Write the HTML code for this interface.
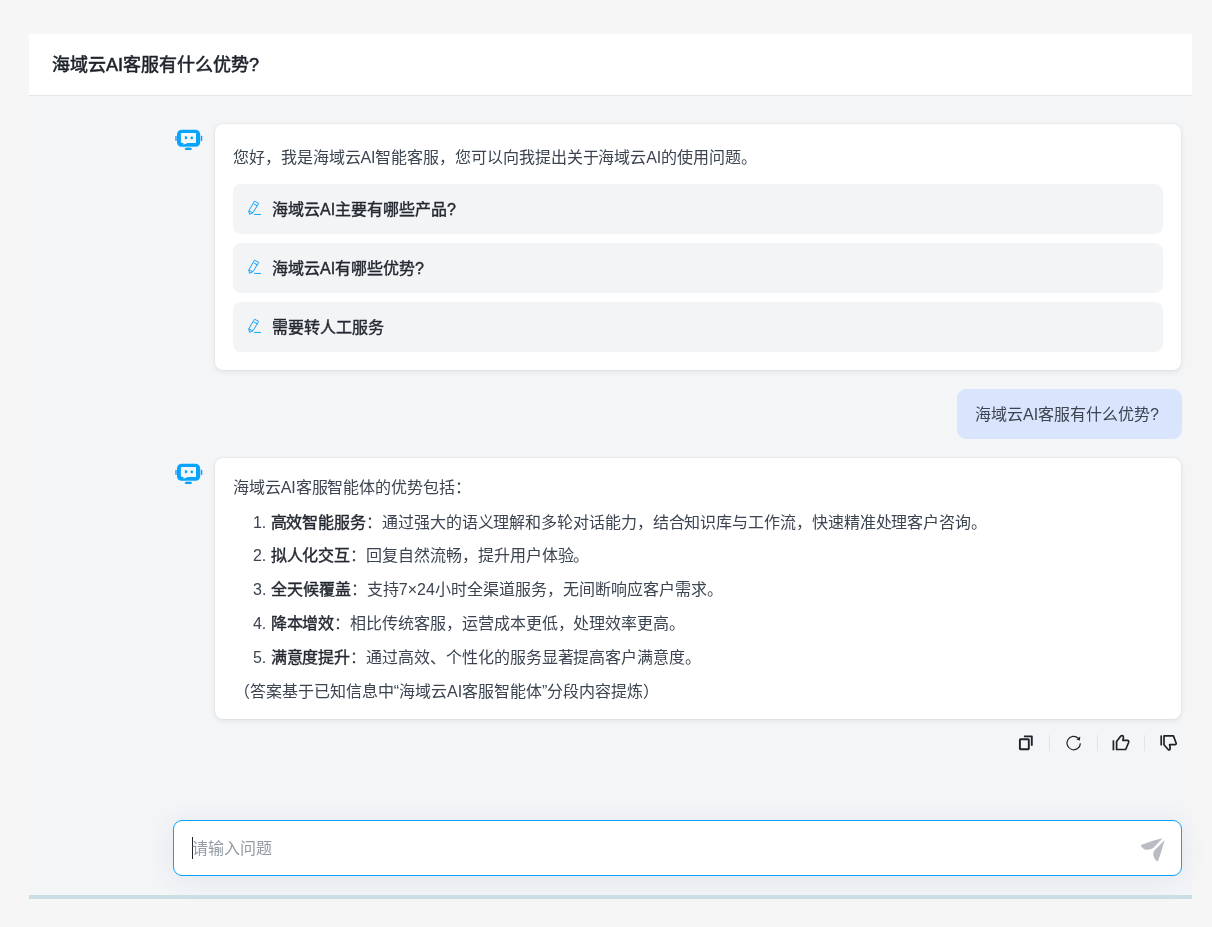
<!DOCTYPE html>
<html lang="zh-CN"><head><meta charset="utf-8">
<style>
*{box-sizing:border-box;margin:0;padding:0}
.t,.msg,.tx,.li,.ph{will-change:transform}
html,body{width:1212px;height:927px;overflow:hidden;background:#f6f6f6;font-family:"Liberation Sans",sans-serif;color:#1f2329}
.wrap{position:absolute;left:29px;top:34px;width:1163px;height:864px;background:#f4f5f7}
.hdr{position:absolute;left:0;top:0;width:1163px;height:62px;background:#fff;border-bottom:1px solid #e3e5e8}
.hdr .t{position:absolute;left:23px;top:18px;font-size:18px;font-weight:normal;-webkit-text-stroke:.55px #1d2129;line-height:26px;color:#1d2129}
.bline{position:absolute;left:0;top:861px;width:1163px;height:4px;background:#c9dfe3}
.robot{position:absolute;width:34px;height:28px}
.bub{position:absolute;left:186px;width:966px;background:#fff;border-radius:8px;box-shadow:0 0 2px rgba(0,0,0,.1),0 2px 6px rgba(0,0,0,.07)}
.msg{position:absolute;font-size:16px;line-height:24px;color:#3b4450;white-space:nowrap}
.sug{position:absolute;left:18px;width:930px;height:50px;background:#f3f4f6;border-radius:8px}
.sug .pen{position:absolute;left:11px;top:13px;width:22px;height:22px}
.sug .tx{position:absolute;left:38.5px;top:14px;font-size:16px;font-weight:normal;-webkit-text-stroke:.4px #232830;line-height:24px;color:#232830;white-space:nowrap}
.user{position:absolute;left:928px;top:355px;width:225px;height:50px;background:#d9e4fd;border-radius:9px}
.user .tx{position:absolute;left:18px;top:14px;font-size:16px;line-height:24px;color:#3b4450;white-space:nowrap}
.li{position:absolute;left:38px;font-size:16px;line-height:24px;color:#3b4450;white-space:nowrap}
.li b{color:#232830;font-weight:normal;-webkit-text-stroke:.4px #232830}
.acts{position:absolute;top:698px}
.inp{position:absolute;left:144px;top:786px;width:1009px;height:56px;background:#fff;border:1px solid #0aa3fc;border-radius:9px;box-shadow:0 4px 28px rgba(20,70,130,.09)}
.inp .ph{position:absolute;left:18px;top:16px;font-size:16px;line-height:24px;color:#939aa3}
.inp .cur{position:absolute;left:18px;top:16px;width:1px;height:22px;background:#1d2129}
</style></head><body>
<div class="wrap">
  <div class="hdr"><div class="t">海域云AI客服有什么优势?</div></div>

  <svg class="robot" style="left:143px;top:91px" width="34" height="28" viewBox="0 0 34 28"><rect x="3" y="10.9" width="2.2" height="5" fill="#5db8fb"/><rect x="28.8" y="10.7" width="1.5" height="5.4" rx=".7" fill="#08a3fb"/><rect x="5" y="4.8" width="23.2" height="17" rx="4.6" fill="#08a3fb"/><path d="M10 8h14v10h-8.2l-4.6 1.8 .5-1.5-2.8-.8V9a1 1 0 0 1 1-1z" fill="#f4f6f8"/><path d="M12.9 11.35h1a1.45 1.45 0 0 1 0 2.9h-1z" fill="#08a3fb"/><circle cx="19.8" cy="12.9" r="1.35" fill="#08a3fb"/><rect x="14.2" y="21.6" width="4.5" height="1.4" fill="#8fd0fd"/><rect x="12.8" y="23" width="7.1" height="2" rx="1" fill="#08a3fb"/></svg>
  <div class="bub" style="top:90px;height:246px">
    <div class="msg" style="left:18px;top:22px;letter-spacing:-.07px">您好，我是海域云AI智能客服，您可以向我提出关于海域云AI的使用问题。</div>
    <div class="sug" style="top:60px"><svg class="pen" width="22" height="22" viewBox="0 0 22 22"><g fill="none" stroke="#14a2f8" stroke-width="1" stroke-linejoin="round"><path d="M10.45 4.2L14.7 6.4L9 15.7L5.5 17.3L4.75 14Z"/><path d="M9.8 7L13.3 8.8M4.8 14L9 15.7"/><path d="M10.2 17.45H16.9"/></g></svg><div class="tx">海域云AI主要有哪些产品?</div></div>
    <div class="sug" style="top:119px"><svg class="pen" width="22" height="22" viewBox="0 0 22 22"><g fill="none" stroke="#14a2f8" stroke-width="1" stroke-linejoin="round"><path d="M10.45 4.2L14.7 6.4L9 15.7L5.5 17.3L4.75 14Z"/><path d="M9.8 7L13.3 8.8M4.8 14L9 15.7"/><path d="M10.2 17.45H16.9"/></g></svg><div class="tx">海域云AI有哪些优势?</div></div>
    <div class="sug" style="top:178px"><svg class="pen" width="22" height="22" viewBox="0 0 22 22"><g fill="none" stroke="#14a2f8" stroke-width="1" stroke-linejoin="round"><path d="M10.45 4.2L14.7 6.4L9 15.7L5.5 17.3L4.75 14Z"/><path d="M9.8 7L13.3 8.8M4.8 14L9 15.7"/><path d="M10.2 17.45H16.9"/></g></svg><div class="tx">需要转人工服务</div></div>
  </div>

  <div class="user"><div class="tx">海域云AI客服有什么优势?</div></div>

  <svg class="robot" style="left:143px;top:425px" width="34" height="28" viewBox="0 0 34 28"><rect x="3" y="10.9" width="2.2" height="5" fill="#5db8fb"/><rect x="28.8" y="10.7" width="1.5" height="5.4" rx=".7" fill="#08a3fb"/><rect x="5" y="4.8" width="23.2" height="17" rx="4.6" fill="#08a3fb"/><path d="M10 8h14v10h-8.2l-4.6 1.8 .5-1.5-2.8-.8V9a1 1 0 0 1 1-1z" fill="#f4f6f8"/><path d="M12.9 11.35h1a1.45 1.45 0 0 1 0 2.9h-1z" fill="#08a3fb"/><circle cx="19.8" cy="12.9" r="1.35" fill="#08a3fb"/><rect x="14.2" y="21.6" width="4.5" height="1.4" fill="#8fd0fd"/><rect x="12.8" y="23" width="7.1" height="2" rx="1" fill="#08a3fb"/></svg>
  <div class="bub" style="top:424px;height:261px">
    <div class="msg" style="left:18px;top:18px;letter-spacing:-.1px">海域云AI客服智能体的优势包括：</div>
    <div class="li" style="top:53px;letter-spacing:-.08px">1. <b>高效智能服务</b>：通过强大的语义理解和多轮对话能力，结合知识库与工作流，快速精准处理客户咨询。</div>
    <div class="li" style="top:86px;letter-spacing:-.06px">2. <b>拟人化交互</b>：回复自然流畅，提升用户体验。</div>
    <div class="li" style="top:120px">3. <b>全天候覆盖</b>：支持7×24小时全渠道服务，无间断响应客户需求。</div>
    <div class="li" style="top:154px;letter-spacing:-.06px">4. <b>降本增效</b>：相比传统客服，运营成本更低，处理效率更高。</div>
    <div class="li" style="top:188px;letter-spacing:-.06px">5. <b>满意度提升</b>：通过高效、个性化的服务显著提高客户满意度。</div>
    <div class="msg" style="left:19px;top:222px;letter-spacing:-.02px">（答案基于已知信息中“海域云AI客服智能体”分段内容提炼）</div>
  </div>

  <div class="inp"><div class="cur"></div><div class="ph">请输入问题</div></div>
  <div class="bline"></div>
</div>
<svg style="position:absolute;left:0;top:0" width="1212" height="927" viewBox="0 0 1212 927">
<g fill="none" stroke="#1f2329" stroke-width="1.9" stroke-linejoin="round">
<rect x="1019.9" y="739.2" width="8.9" height="10" rx=".6"/>
<path d="M1023.9 736.4H1031.8V745.8"/>
</g>
<g stroke="#e3e4e6" stroke-width="1"><path d="M1049.5 735V751M1097.5 735V751M1144.5 735V751"/></g>
<g fill="none" stroke="#1f2329" stroke-width="1.2">
<path d="M1080.4 743.4A6.7 6.7 0 1 1 1078.3 738.2"/>
</g>
<path d="M1080.2 736.6L1080 740.6L1076.4 739.6Z" fill="#1f2329"/>
<g fill="none" stroke="#1f2329" stroke-width="1.7" stroke-linejoin="round">
<path d="M1113.4 740.3V750.3"/>
<path d="M1116.6 741.6L1120.8 736Q1123.6 734.8 1123.4 737.6L1122.9 740.4H1127.4Q1129.1 740.6 1128.6 742.5L1125.7 749.5H1116.6Z"/>
<path d="M1161.2 735.4V745.4"/>
<path d="M1164 735.9H1173.4L1176.2 743.2Q1176.4 744.6 1174.9 744.7H1169.6L1170.2 748.5Q1170 750.6 1168.4 749.7L1164 744.7Z"/>
</g>
<path d="M1162.6 838.2L1153.8 847.6C1151 849.8 1146 850.8 1143.2 848.4C1141.2 846.8 1140.6 845.6 1141.2 845C1148 842 1156 839.6 1162.6 838.2Z" fill="#b9bdc3"/>
<path d="M1164.7 840L1154.4 850.6C1152.6 853.4 1152.6 857.8 1157.6 861.8C1160.2 856 1163 846 1164.7 840Z" fill="#b9bdc3"/>
</svg>
</body></html>
